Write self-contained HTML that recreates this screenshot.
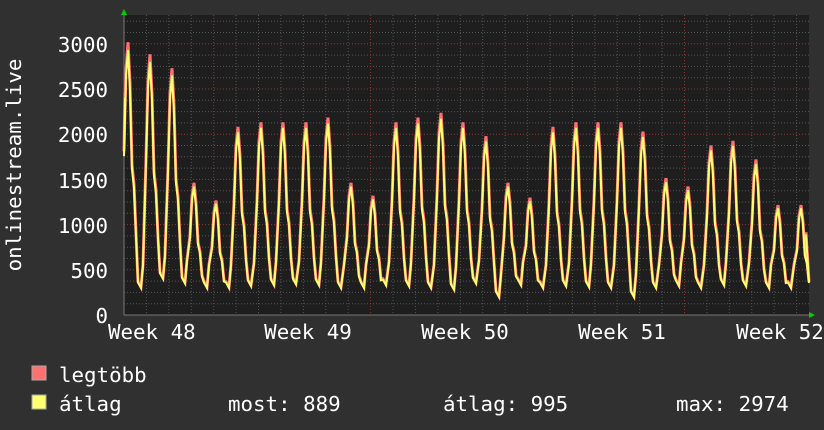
<!DOCTYPE html>
<html><head><meta charset="utf-8"><style>
html,body{margin:0;padding:0;background:#303030;}
svg{display:block;}
text{font-family:"DejaVu Sans Mono","Liberation Mono",monospace;font-size:20.8px;fill:#fff;}
</style></head><body>
<svg id="s" width="824" height="430" viewBox="0 0 824 430">
<rect width="824" height="430" fill="#303030"/>
<rect x="124" y="15" width="685" height="300" fill="#1e1e1e"/>
<g id="grid"></g>
<g id="data"></g>
<polygon points="121,15 127,15 124,9" fill="#00d000"/>
<polygon points="809,312 809,318 815,315" fill="#00d000"/>
<g text-anchor="end">
<text x="108" y="52">3000</text>
<text x="108" y="97">2500</text>
<text x="108" y="142">2000</text>
<text x="108" y="188">1500</text>
<text x="108" y="233">1000</text>
<text x="108" y="278">500</text>
<text x="108" y="323">0</text>
</g>
<text transform="translate(21,165) rotate(-90)" text-anchor="middle">onlinestream.live</text>
<text x="108" y="339">Week 48</text>
<g text-anchor="middle">
<text x="308" y="339">Week 49</text>
<text x="465" y="339">Week 50</text>
<text x="622" y="339">Week 51</text>
<text x="780" y="339">Week 52</text>
</g>
<rect x="32" y="366" width="14" height="14" fill="#ff7070" stroke="#aaa" stroke-width="1"/>
<rect x="32" y="395" width="14" height="14" fill="#ffff70" stroke="#aaa" stroke-width="1"/>
<text x="59" y="382">legtöbb</text>
<text x="59" y="411">átlag</text>
<text x="228" y="411">most: 889</text>
<text x="443" y="411">átlag: 995</text>
<text x="676" y="411">max: 2974</text>
</svg>
<script>
var NS="http://www.w3.org/2000/svg";
function el(p,t,a){var e=document.createElementNS(NS,t);for(var k in a)e.setAttribute(k,a[k]);p.appendChild(e);return e;}
var g=document.getElementById('grid');
function Y(v){return 315-v*0.0904;}
for(var v=125;v<=3250;v+=125){var y=Y(v);if(y<15)break;var maj=v%500==0;
el(g,'line',{x1:124,x2:809,y1:y,y2:y,stroke:maj?'#903535':'#555',"stroke-width":1,"stroke-dasharray":"1,2"});}
for(var i=0;i<31;i++){var x=124+i*22.42;if(x>809)break;var maj=(i%7==4);
el(g,'line',{x1:x,x2:x,y1:15,y2:315,stroke:maj?'#903535':'#555',"stroke-width":1,"stroke-dasharray":"1,2"});}
el(g,'line',{x1:124,x2:809,y1:315,y2:315,stroke:'#777'});
el(g,'line',{x1:124,x2:124,y1:15,y2:315,stroke:'#777'});
var pk=[[128,2930],[150,2800],[172,2650],[194,1420],[216,1230],[238,2020],[261,2070],[283,2070],[306,2070],[328,2120],[351,1420],[373,1280],[396,2070],[418,2120],[441,2170],[463,2070],[486,1920],[508,1420],[530,1260],[553,2020],[576,2070],[598,2070],[621,2070],[643,1970],[666,1470],[688,1380],[711,1820],[733,1870],[756,1670],[778,1180],[801,1180]];
var tr=[300,400,350,300,300,320,330,340,330,300,300,330,320,300,280,350,200,330,300,320,310,300,200,300,320,300,330,320,300,300,300];
function build(f,dx){var pts=[[125,2400*f]];
for(var i=0;i<pk.length;i++){var x=pk[i][0]+dx,p=pk[i][1]*f,t=tr[i]*f;
if(i>0)pts.push([x-7,tr[i-1]*f+250]);
pts.push([x-4,p*0.6]);pts.push([x-2,p*0.9]);pts.push([x,p]);pts.push([x+2,p*0.85]);
pts.push([x+4,p*0.55]);pts.push([x+6,p*0.48]);pts.push([x+8,p*0.3]);pts.push([x+10,t+60]);pts.push([x+13,t]);}
pts.length=pts.length-2;pts.push([806,889*f]);
return pts.map(function(q){return q[0].toFixed(1)+','+Y(q[1]).toFixed(1)}).join(' ');}
var d=document.getElementById('data');
el(d,'polyline',{points:build(1.03,0),fill:'none',stroke:'#ff7070',"stroke-width":3});
el(d,'polyline',{points:build(1,0),fill:'none',stroke:'#ffff70',"stroke-width":2});
</script>
</body></html>
